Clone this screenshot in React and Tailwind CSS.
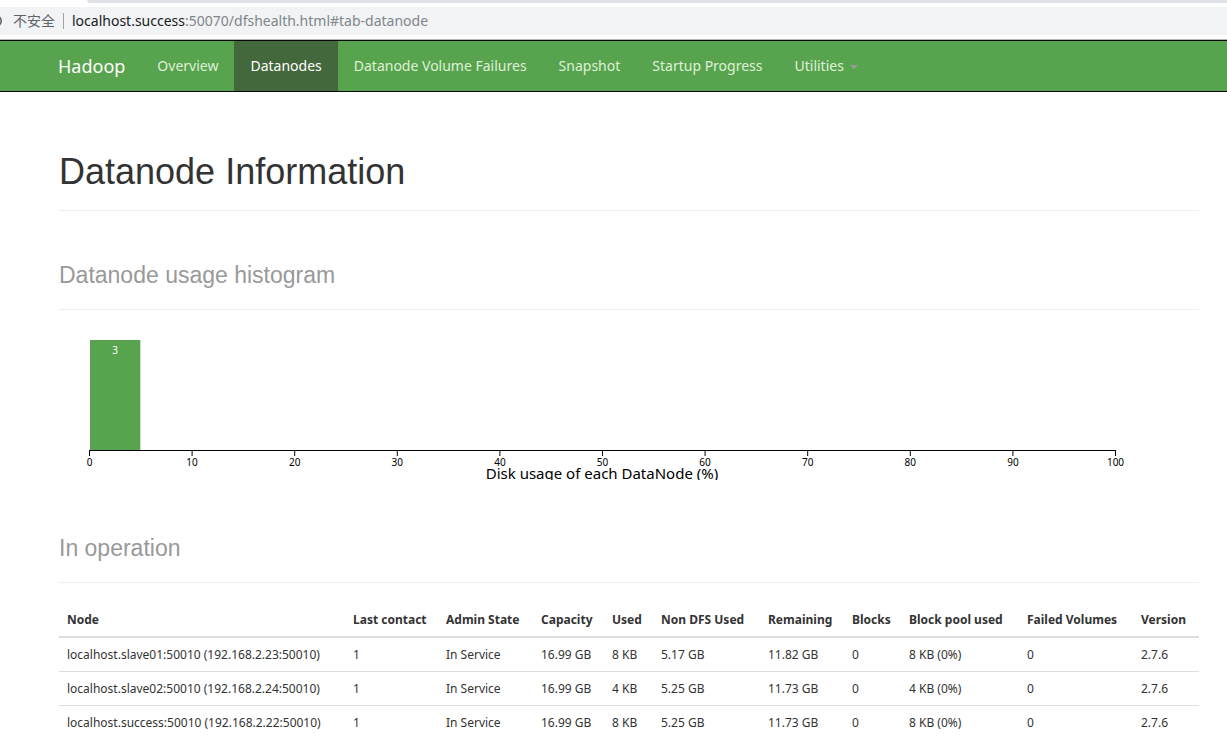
import React from "react";

const links = [
  { label: "Overview" },
  { label: "Datanodes", active: true },
  { label: "Datanode Volume Failures" },
  { label: "Snapshot" },
  { label: "Startup Progress" },
];

const columns = [
  { label: "Node", width: 286 },
  { label: "Last contact", width: 93 },
  { label: "Admin State", width: 95 },
  { label: "Capacity", width: 71 },
  { label: "Used", width: 49 },
  { label: "Non DFS Used", width: 107 },
  { label: "Remaining", width: 84 },
  { label: "Blocks", width: 57 },
  { label: "Block pool used", width: 118 },
  { label: "Failed Volumes", width: 114 },
  { label: "Version", width: 66 },
];
const totalWidth = columns.reduce((sum, c) => sum + c.width, 0);

const rows = [
  ["localhost.slave01:50010 (192.168.2.23:50010)", "1", "In Service", "16.99 GB", "8 KB", "5.17 GB", "11.82 GB", "0", "8 KB (0%)", "0", "2.7.6"],
  ["localhost.slave02:50010 (192.168.2.24:50010)", "1", "In Service", "16.99 GB", "4 KB", "5.25 GB", "11.73 GB", "0", "4 KB (0%)", "0", "2.7.6"],
  ["localhost.success:50010 (192.168.2.22:50010)", "1", "In Service", "16.99 GB", "8 KB", "5.25 GB", "11.73 GB", "0", "8 KB (0%)", "0", "2.7.6"],
];

function BrowserBar() {
  return (
    <div className="border-b border-[#b4b5b8] bg-white pb-1">
      <div className="ml-[87px] h-[3px] rounded-bl bg-[#dee1e6]" />
      <div className="mt-1 flex h-7 items-center bg-[#f1f3f4] text-sm">
        <svg className="h-3 w-[13px] shrink-0" viewBox="0 0 13 12" aria-hidden="true">
          <circle cx="-4" cy="6" r="5.2" fill="none" stroke="#5f6368" strokeWidth="1.6" />
        </svg>
        <span className="text-[#5f6368]">不安全</span>
        <span className="mx-2 h-4 w-px bg-[#a0a3a7]" />
        <span className="text-[#80868b]">
          <span className="text-[#202124]">localhost.success</span>:50070/dfshealth.html#tab-datanode
        </span>
      </div>
    </div>
  );
}

function Navbar() {
  return (
    <nav className="flex h-[52px] border-y border-[#080808] bg-[#58a44e] pl-[42px] text-sm text-[#dff0d8]">
      <a href="#" className="flex items-center px-4 text-lg text-white">Hadoop</a>
      {links.map((l) => (
        <a
          key={l.label}
          href="#"
          className={
            l.active
              ? "flex items-center bg-[#43683b] px-4 text-white"
              : "flex items-center px-4"
          }
        >
          {l.label}
        </a>
      ))}
      <button type="button" className="flex items-center gap-[6px] px-4">
        Utilities
        <svg className="mt-0.5 h-1 w-2" viewBox="0 0 8 4" aria-hidden="true">
          <path d="M0 0H8L4 4Z" fill="#999" />
        </svg>
      </button>
    </nav>
  );
}

function Histogram() {
  const ticks = [0, 10, 20, 30, 40, 50, 60, 70, 80, 90, 100];
  return (
    <svg className="block h-[140px] w-full overflow-hidden" viewBox="0 0 1140 140" role="img" aria-label="Datanode usage histogram">
      <rect x="31" y="0" width="50.3" height="110" fill="#58a44e" />
      <text x="56" y="14" fontSize="10" fill="#fff" textAnchor="middle">3</text>
      <path d="M30.5 116V110.5H1056.5V116" fill="none" stroke="#000" />
      {ticks.map((t) => (
        <g key={t}>
          <path d={`M${30.5 + t * 10.26} 110V116`} stroke="#000" />
          <text x={30.5 + t * 10.26} y="126" fontSize="10" textAnchor="middle">{t}</text>
        </g>
      ))}
      <text x="543" y="139" fontSize="15" textAnchor="middle">Disk usage of each DataNode (%)</text>
    </svg>
  );
}

function SectionTitle({ children }) {
  return (
    <h2 className="border-b border-[#eee] pb-5 font-['Liberation_Sans',Arial,sans-serif] text-[23px] leading-7 text-[#999]">
      {children}
    </h2>
  );
}

export default function App() {
  return (
    <div className="min-h-screen bg-white font-['Noto_Sans','Noto_Sans_CJK_SC',sans-serif] text-[#333]">
      <BrowserBar />
      <Navbar />
      <main className="pt-[60px] pr-7 pl-[59px]">
        <h1 className="border-b border-[#eee] pb-[18px] font-['Liberation_Sans',Arial,sans-serif] text-4xl leading-10">
          Datanode Information
        </h1>
        <section className="pt-[50px]">
          <SectionTitle>Datanode usage histogram</SectionTitle>
          <div className="pt-[30px]">
            <Histogram />
          </div>
        </section>
        <section className="pt-[54px]">
          <SectionTitle>In operation</SectionTitle>
          <table className="mt-5 w-full table-fixed border-collapse text-left text-xs">
            <colgroup>
              {columns.map((c) => (
                <col key={c.label} style={{ width: `${(c.width / totalWidth) * 100}%` }} />
              ))}
            </colgroup>
            <thead>
              <tr className="border-b-2 border-[#ddd]">
                {columns.map((c) => (
                  <th key={c.label} className="h-[34px] pl-2 font-bold whitespace-nowrap">{c.label}</th>
                ))}
              </tr>
            </thead>
            <tbody>
              {rows.map((r) => (
                <tr key={r[0]} className="border-b border-[#ddd] last:border-b-0">
                  {r.map((cell, i) => (
                    <td key={columns[i].label} className="h-[34px] pt-0.5 pl-2 whitespace-nowrap">{cell}</td>
                  ))}
                </tr>
              ))}
            </tbody>
          </table>
        </section>
      </main>
    </div>
  );
}
